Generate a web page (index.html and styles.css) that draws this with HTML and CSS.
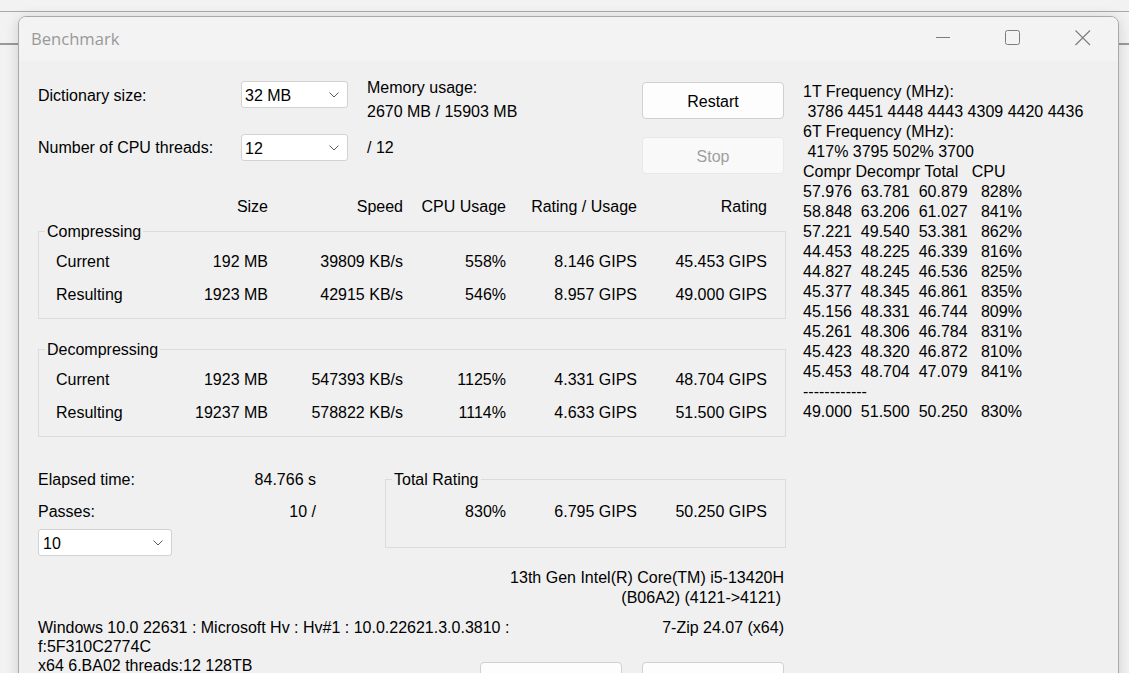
FILE: index.html
```html
<!DOCTYPE html>
<html>
<head>
<meta charset="utf-8">
<title>Benchmark</title>
<link rel="stylesheet" href="styles.css">
</head>
<body>
<div class="desk-line line-a"></div>
<div class="desk-line line-b"></div>
<div class="window">
  <div class="titlebar">
    <span class="title">Benchmark</span>
    <div class="controls">
      <span class="ctl"><svg width="16" height="16" viewBox="0 0 16 16"><path d="M1 7.5h14" stroke="#7c7c7c" stroke-width="1" fill="none"/></svg></span>
      <span class="ctl"><svg width="16" height="16" viewBox="0 0 16 16"><rect x="0.5" y="0.5" width="14" height="14" rx="2" stroke="#7c7c7c" stroke-width="1" fill="none"/></svg></span>
      <span class="ctl"><svg width="16" height="16" viewBox="0 0 16 16"><path d="M0.5 0.5L15 15M15 0.5L0.5 15" stroke="#7c7c7c" stroke-width="1.1" fill="none"/></svg></span>
    </div>
  </div>
  <div class="body">
    <div class="main">
      <div class="top">
        <span class="lbl first">Dictionary size:</span>
        <div class="combo"><span>32 MB</span><svg class="chev" width="10" height="6" viewBox="0 0 10 6"><path d="M0.5 0.5L5 5L9.5 0.5" stroke="#5c5c5c" fill="none"/></svg></div>
        <div class="mem">Memory usage:<br>2670 MB / 15903 MB</div>
        <button class="btn">Restart</button>
        <span class="lbl">Number of CPU threads:</span>
        <div class="combo"><span>12</span><svg class="chev" width="10" height="6" viewBox="0 0 10 6"><path d="M0.5 0.5L5 5L9.5 0.5" stroke="#5c5c5c" fill="none"/></svg></div>
        <div class="threads">/ 12</div>
        <button class="btn disabled">Stop</button>
      </div>

      <div class="cols hdr">
        <span></span><span>Size</span><span>Speed</span><span>CPU Usage</span><span>Rating / Usage</span><span>Rating</span>
      </div>

      <fieldset class="grp">
        <legend>Compressing</legend>
        <div class="cols row"><span class="name">Current</span><span>192 MB</span><span>39809 KB/s</span><span>558%</span><span>8.146 GIPS</span><span>45.453 GIPS</span></div>
        <div class="cols row"><span class="name">Resulting</span><span>1923 MB</span><span>42915 KB/s</span><span>546%</span><span>8.957 GIPS</span><span>49.000 GIPS</span></div>
      </fieldset>

      <fieldset class="grp second">
        <legend>Decompressing</legend>
        <div class="cols row"><span class="name">Current</span><span>1923 MB</span><span>547393 KB/s</span><span>1125%</span><span>4.331 GIPS</span><span>48.704 GIPS</span></div>
        <div class="cols row"><span class="name">Resulting</span><span>19237 MB</span><span>578822 KB/s</span><span>1114%</span><span>4.633 GIPS</span><span>51.500 GIPS</span></div>
      </fieldset>

      <div class="bottom">
        <div class="stats">
          <div class="stat"><span>Elapsed time:</span><span>84.766 s</span></div>
          <div class="stat passes"><span>Passes:</span><span>10 /</span></div>
          <div class="combo small"><span>10</span><svg class="chev" width="10" height="6" viewBox="0 0 10 6"><path d="M0.5 0.5L5 5L9.5 0.5" stroke="#5c5c5c" fill="none"/></svg></div>
        </div>
        <fieldset class="grp total">
          <legend>Total Rating</legend>
          <div class="tcols"><span></span><span>830%</span><span>6.795 GIPS</span><span>50.250 GIPS</span></div>
        </fieldset>
      </div>

      <div class="cpu">
        <div class="cpu1">13th Gen Intel(R) Core(TM) i5-13420H</div>
        <div class="cpu2">(B06A2) (4121-&gt;4121)</div>
      </div>

      <div class="info">
        <div class="sys">Windows 10.0 22631 : Microsoft Hv : Hv#1 : 10.0.22621.3.0.3810 :<br>f:5F310C2774C<br>x64 6.BA02 threads:12 128TB</div>
        <div class="ver">
          <div class="zip">7-Zip 24.07 (x64)</div>
          <div class="btns"><button class="btn">Help</button><button class="btn">Cancel</button></div>
        </div>
      </div>
    </div>

    <div class="log">1T Frequency (MHz):
 3786 4451 4448 4443 4309 4420 4436
6T Frequency (MHz):
 417% 3795 502% 3700
Compr Decompr Total   CPU
57.976  63.781  60.879   828%
58.848  63.206  61.027   841%
57.221  49.540  53.381   862%
44.453  48.225  46.339   816%
44.827  48.245  46.536   825%
45.377  48.345  46.861   835%
45.156  48.331  46.744   809%
45.261  48.306  46.784   831%
45.423  48.320  46.872   810%
45.453  48.704  47.079   841%
------------
49.000  51.500  50.250   830%</div>
  </div>
</div>
</body>
</html>
```

FILE: styles.css
```css
html, body {
  margin: 0;
  padding: 0;
  width: 1129px;
  height: 673px;
  overflow: hidden;
  background: #f2f2f2;
  font-family: "Liberation Sans", Arial, sans-serif;
  font-size: 16px;
  color: #000;
}

.desk-line {
  position: absolute;
  left: 0;
  right: 0;
  background: #a9a9a9;
}
.line-a { top: 11px; height: 1px; }
.line-b { top: 43px; height: 2px; background: #9a9a9a; }

.window {
  position: absolute;
  left: 18px;
  top: 16px;
  width: 1101px;
  height: 720px;
  box-sizing: border-box;
  border: 1px solid #a9a9a9;
  border-radius: 8px 8px 0 0;
  background: #f0f0f0;
  box-shadow: 0 2px 14px rgba(0, 0, 0, 0.14);
  overflow: hidden;
}

.titlebar {
  height: 44px;
  background: #f3f3f3;
  display: flex;
  align-items: center;
  justify-content: space-between;
}
.title {
  padding-left: 12px;
  font-family: "Open Sans", "Noto Sans", sans-serif;
  font-size: 16.6px;
  color: #999;
  margin-top: -1px;
}
.controls {
  display: flex;
  height: 44px;
}
.ctl {
  width: 70px;
  height: 44px;
  display: flex;
  align-items: center;
  justify-content: center;
}
.ctl svg { margin-top: -2px; }

.body {
  display: grid;
  grid-template-columns: 748px 1fr;
  column-gap: 17px;
  padding: 20px 0 0 19px;
}

/* top controls */
.top {
  display: grid;
  grid-template-columns: 203px 107px 294px 142px;
  grid-template-rows: 53px 41px;
  align-items: start;
}
.lbl {
  line-height: 27px;
}
.lbl.first { padding-top: 1px; }
.combo {
  height: 27px;
  box-sizing: border-box;
  background: #fff;
  border: 1px solid #d2d2d2;
  border-radius: 3px;
  display: flex;
  align-items: center;
  justify-content: space-between;
  padding: 0 8px 0 3px;
}
.combo span { line-height: 25px; padding-top: 1px; }
.chev { display: block; }
.mem {
  padding-left: 19px;
  line-height: 24px;
  margin-top: -5px;
}
.threads {
  padding-left: 19px;
  line-height: 27px;
}
.btn {
  width: 142px;
  height: 37px;
  box-sizing: border-box;
  background: #fdfdfd;
  border: 1px solid #d0d0d0;
  border-radius: 4px;
  font-family: inherit;
  font-size: 16px;
  color: #000;
  padding: 2px 0 0 0;
  margin: 1px 0 0 0;
}
.btn.disabled {
  background: #f9f9f9;
  border-color: #e8e8e8;
  color: #9f9f9f;
  margin-top: 3px;
}

/* table */
.cols {
  display: grid;
  grid-template-columns: 129px 100px 135px 103px 131px 130px;
}
.cols > span { text-align: right; white-space: nowrap; }
.cols > span.name { text-align: left; padding-left: 17px; }
.hdr {
  margin-top: 22px;
  padding-left: 1px;
  line-height: 20px;
}
.row { line-height: 33px; }

.grp {
  margin: 4px 0 0 0;
  padding: 3px 0 7px 0;
  border: 1px solid #dcdcdc;
  min-width: 0;
}
.grp legend {
  padding: 1px 2px 0;
  margin-left: 6px;
  line-height: 20px;
}
.grp.second { margin-top: 20px; }

/* bottom */
.bottom {
  margin-top: 32px;
  display: grid;
  grid-template-columns: 278px 401px;
  column-gap: 69px;
  align-items: start;
}
.stat {
  display: flex;
  justify-content: space-between;
  line-height: 20px;
  padding-top: 1px;
}
.stat.passes { margin-top: 11px; }
.combo.small {
  width: 134px;
  margin-top: 7px;
  padding-left: 4px;
}
.grp.total {
  margin: 0;
  padding: 12px 0 25px 0;
}
.tcols {
  display: grid;
  grid-template-columns: 17px 103px 131px 130px;
  line-height: 20px;
}
.tcols > span { text-align: right; }

.cpu {
  margin-top: 12px;
  text-align: right;
  line-height: 20px;
}
.cpu1 { padding-right: 2px; }
.cpu2 { padding-right: 5px; }

.info {
  margin-top: 10px;
  display: grid;
  grid-template-columns: minmax(0, 1fr) 306px;
}
.sys {
  line-height: 19px;
  white-space: nowrap;
}
.zip {
  text-align: right;
  padding-right: 2px;
  line-height: 19px;
}
.btns {
  display: flex;
  gap: 20px;
  margin-top: 25px;
}
.btns .btn { margin: 0; }

.log {
  white-space: pre;
  line-height: 20px;
  padding-top: 1px;
}
```
